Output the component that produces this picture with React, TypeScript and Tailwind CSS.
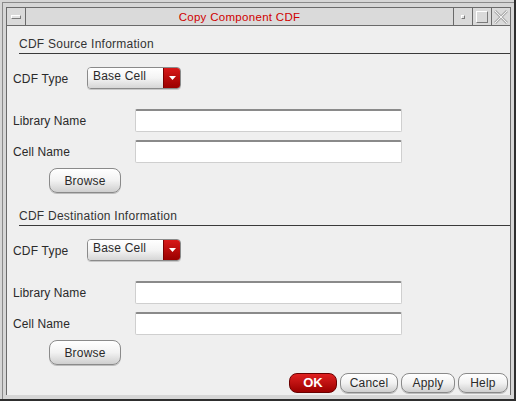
import React from "react";

const font = { fontFamily: '"Liberation Sans", Arial, sans-serif' };

function Select() {
  return (
    <div className="flex h-[22px] w-[94px] rounded-[4px] border border-[#8a8a8a] overflow-hidden shadow-[0_1px_0_#c8c8c8]">
      <div className="flex-1 bg-gradient-to-b from-[#ffffff] via-[#f4f4f4] to-[#d6d6d6] pl-[5px] text-[12px] leading-[17px] tracking-[0.2px] text-[#2a2a2a]">
        Base Cell
      </div>
      <div className="w-[17px] bg-gradient-to-b from-[#d81818] to-[#9a0000] flex items-center justify-center border-l border-[#7a0000]">
        <svg width="7" height="4" viewBox="0 0 7 4">
          <path d="M0 0 H7 L3.5 4 Z" fill="#ffffff" />
        </svg>
      </div>
    </div>
  );
}

function Input() {
  return (
    <div className="h-[23px] w-[267px] bg-white rounded-[2px] border border-[#cfcfcf] border-t-[#8a8a8a] border-t-2" />
  );
}

function Btn({ label, w, h = 25, primary = false }: { label: string; w: number; h?: number; primary?: boolean }) {
  return (
    <div
      className={
        primary
          ? "flex items-center justify-center rounded-[8px] border border-[#6a0000] bg-gradient-to-b from-[#e02020] to-[#9c0000] text-white font-bold text-[13px]"
          : "flex items-center justify-center rounded-[8px] border border-[#8a8a8a] bg-gradient-to-b from-[#ffffff] via-[#f2f2f2] to-[#cfcfcf] text-[#2a2a2a] text-[12px] tracking-[0.2px] shadow-[0_1px_0_#bdbdbd]"
      }
      style={{ width: w, height: h }}
    >
      {label}
    </div>
  );
}

function Section({ title }: { title: string }) {
  return (
    <div className="flex flex-col">
      <div className="ml-[12px] h-[17px] border-b border-[#3a3a3a] text-[12px] leading-[14px] tracking-[0.25px] text-[#333]">
        {title}
      </div>
      <div className="mt-[13px] flex items-center h-[22px] pl-[6px]">
        <div className="w-[74px] text-[12px] tracking-[0.2px] text-[#2a2a2a] pt-[2px]">CDF Type</div>
        <Select />
      </div>
      <div className="mt-[20px] flex items-center pl-[6px]">
        <div className="w-[122px] text-[12px] tracking-[0.1px] text-[#2a2a2a]">Library Name</div>
        <Input />
      </div>
      <div className="mt-[8px] flex items-center pl-[6px]">
        <div className="w-[122px] text-[12px] tracking-[0.1px] text-[#2a2a2a]">Cell Name</div>
        <Input />
      </div>
      <div className="mt-[5px] pl-[42px]">
        <Btn label="Browse" w={72} />
      </div>
    </div>
  );
}

export default function App() {
  return (
    <div
      className="w-[516px] h-[401px] bg-[#d6d6d6] border-r-2 border-b-2 border-[#2e2e2e] pt-[2px] pl-[2px] flex"
      style={font}
    >
      <div className="flex-1 border-t border-l border-[#8a8a8a] pt-[4px] pl-[3px] pr-[3px] pb-[4px] flex">
        <div className="flex-1 flex flex-col border border-[#6a6a6a] border-b-0">
          {/* title bar */}
          <div className="h-[18px] flex bg-[#dadada] border-b border-[#6a6a6a]">
            <div className="w-[19px] border-r border-[#6a6a6a] flex items-center justify-center">
              <div className="w-[10px] h-[4px] border border-[#7a7a7a] border-t-white border-l-white bg-[#e2e2e2]" />
            </div>
            <div className="flex-1 text-center text-[11.5px] leading-[18px] tracking-[0.3px] text-[#d00000]">Copy Component CDF</div>
            <div className="w-[19px] border-l border-[#6a6a6a] flex items-center justify-center">
              <div className="w-[4px] h-[4px] border border-[#7a7a7a] border-t-white border-l-white bg-[#e2e2e2]" />
            </div>
            <div className="w-[19px] border-l border-[#6a6a6a] flex items-center justify-center">
              <div className="w-[12px] h-[12px] border border-[#7a7a7a] border-t-white border-l-white bg-[#dadada]" />
            </div>
            <div className="w-[19px] border-l border-[#6a6a6a] flex items-center justify-center">
              <svg width="14" height="14" viewBox="0 0 14 14">
                <path d="M1 1 L13 13 M13 1 L1 13" stroke="#b0b0b0" strokeWidth="3" />
                <path d="M1 1 L13 13 M13 1 L1 13" stroke="#f2f2f2" strokeWidth="1" />
              </svg>
            </div>
          </div>
          {/* content */}
          <div className="flex-1 bg-[#efefef] flex flex-col pt-[11px]">
            <Section title="CDF Source Information" />
            <div className="mt-[16px]">
              <Section title="CDF Destination Information" />
            </div>
            <div className="mt-[8px] flex justify-end gap-[3px] pr-[2px]">
              <Btn label="OK" w={48} h={20} primary />
              <Btn label="Cancel" w={58} h={20} />
              <Btn label="Apply" w={54} h={20} />
              <Btn label="Help" w={50} h={20} />
            </div>
          </div>
        </div>
      </div>
    </div>
  );
}
